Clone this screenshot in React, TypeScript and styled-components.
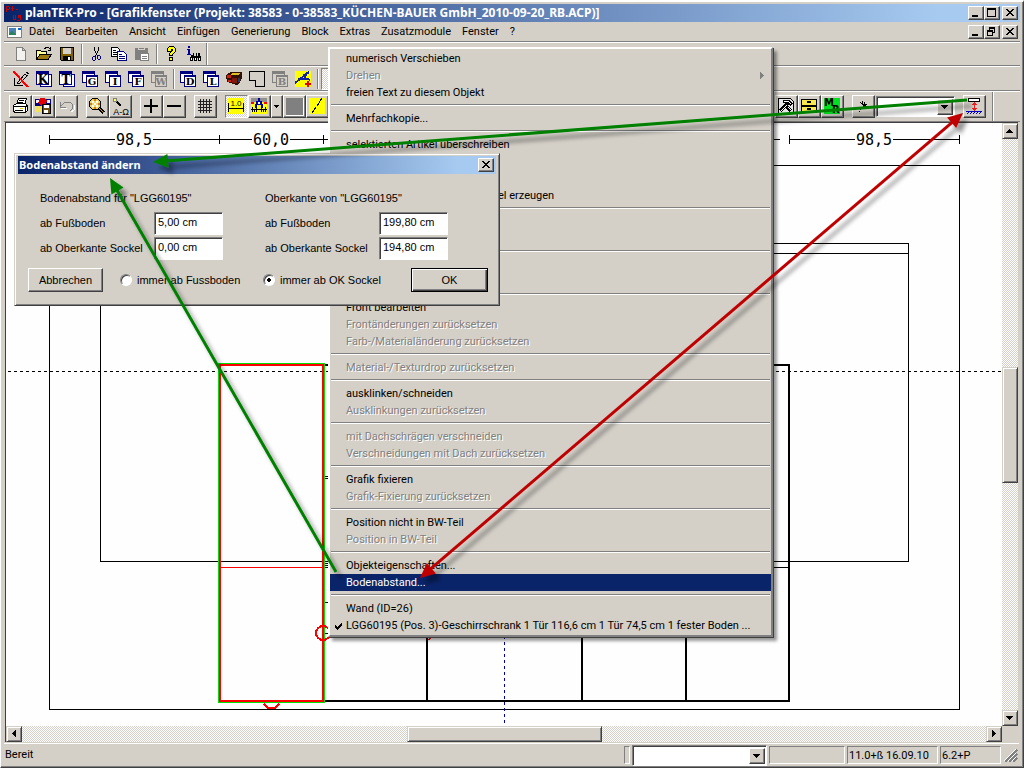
import React from "react";
import styled, { createGlobalStyle, css } from "styled-components";

const FACE = "#d4d0c8";
const SHADOW = "#808080";
const DARK = "#404040";
const NAVY = "#0a246a";
const UI_FONT = `Roboto, "Liberation Sans", sans-serif`;
const TITLE_FONT = `"Noto Sans", "Open Sans", sans-serif`;

const GlobalStyle = createGlobalStyle`
  * { box-sizing: border-box; }
  body {
    margin: 0;
    background: ${FACE};
    color: #000;
    font-family: ${UI_FONT};
    font-size: 11px;
    line-height: 17px;
  }
  button, input, select { font: inherit; color: inherit; margin: 0; padding: 0; border-radius: 0; }
`;

const raised = css`
  border: 1px solid;
  border-color: #fff ${DARK} ${DARK} #fff;
  box-shadow: inset -1px -1px 0 ${SHADOW};
  background: ${FACE};
`;

const sunken = css`
  border: 1px solid;
  border-color: ${SHADOW} #fff #fff ${SHADOW};
  box-shadow: inset 1px 1px 0 ${DARK};
  background: #fff;
`;

const dither = css`
  background: repeating-conic-gradient(#fff 0 25%, ${FACE} 0 50%) 0 0 / 2px 2px;
`;

const Window = styled.div`
  position: relative;
  display: flex;
  flex-direction: column;
  width: 100%;
  height: 100vh;
  min-height: 640px;
  overflow: hidden;
  padding: 2px 2px 0;
  border: 1px solid;
  border-color: #fff ${DARK} ${DARK} #fff;
  box-shadow: inset -1px -1px 0 ${SHADOW};
  border-top-width: 2px;
`;

const TitleBar = styled.header`
  display: flex;
  align-items: center;
  flex: none;
  height: 18px;
  margin: 0 1px;
  padding: 0 2px 0 1px;
  gap: 4px;
  background: linear-gradient(90deg, ${NAVY}, #a6caf0 92%);
  color: #fff;
`;

const Title = styled.h1<{ $small?: boolean }>`
  flex: 1;
  margin: 0;
  font: bold ${(p) => (p.$small ? 11 : 12)}px/18px ${TITLE_FONT};
  white-space: nowrap;
`;

const CaptionGroup = styled.div`
  display: flex;
`;

const CaptionButton = styled.button<{ $apart?: boolean }>`
  ${raised}
  display: grid;
  place-items: center;
  width: 16px;
  height: 14px;
  margin-left: ${(p) => (p.$apart ? 2 : 0)}px;
`;

const MenuBar = styled.nav`
  display: flex;
  align-items: center;
  flex: none;
  height: 20px;
  margin: 0 1px;
  padding: 0 2px 0 3px;
  border-bottom: 1px solid ${SHADOW};
`;

const MenuList = styled.ul`
  display: flex;
  flex: 1;
  gap: 11px;
  margin: 0 0 0 6px;
  padding: 0;
  list-style: none;
`;

const MenuButton = styled.button`
  border: 0;
  background: none;
  line-height: 17px;
`;

const Toolbar = styled.div<{ $height: number; $raised?: boolean }>`
  display: flex;
  align-items: center;
  flex: none;
  height: ${(p) => p.$height}px;
  margin: 0 1px;
  padding-left: ${(p) => (p.$raised ? 5 : 6)}px;
  border-top: 1px solid #fff;
  border-bottom: 1px solid ${SHADOW};
`;

const Rule = styled.span<{ $tall?: boolean }>`
  flex: none;
  width: 2px;
  height: ${(p) => (p.$tall ? "100%" : "20px")};
  margin: 0 ${(p) => (p.$tall ? 0 : 2)}px;
  border-left: 1px solid ${SHADOW};
  border-right: 1px solid #fff;
`;

const FlatButton = styled.button<{ $pressed?: boolean }>`
  display: grid;
  place-items: start;
  flex: none;
  width: 23px;
  height: 22px;
  padding: 3px 0 0 3px;
  border: 0;
  background: none;
  ${(p) =>
    p.$pressed &&
    css`
      ${dither}
      border: 1px solid;
      border-color: ${SHADOW} #fff #fff ${SHADOW};
    `}
`;

const RaisedButton = styled.button<{ $pressed?: boolean; $narrow?: boolean }>`
  ${raised}
  display: grid;
  place-items: ${(p) => (p.$narrow ? "center" : "start")};
  flex: none;
  width: ${(p) => (p.$narrow ? 12 : 23)}px;
  height: 23px;
  padding: ${(p) => (p.$narrow ? 0 : 2)}px;
  ${(p) =>
    p.$pressed &&
    css`
      ${dither}
      border-color: ${SHADOW} #fff #fff ${SHADOW};
      box-shadow: none;
    `}
`;

const Gap = styled.span<{ $width?: number }>`
  flex: ${(p) => (p.$width ? `0 0 ${p.$width}px` : "1")};
`;

const Combo = styled.div<{ $width: number }>`
  ${sunken}
  display: flex;
  flex: none;
  width: ${(p) => p.$width}px;
  height: 21px;
  padding: 2px 1px 1px 2px;
`;

const ComboSelect = styled.select`
  flex: 1;
  min-width: 0;
  border: 0;
  background: #fff;
  appearance: none;
`;

const ComboArrow = styled.span`
  ${raised}
  display: grid;
  place-items: center;
  width: 16px;
`;

const Workspace = styled.main`
  display: grid;
  flex: 1;
  min-height: 0;
  grid-template: 1fr 16px / 1fr 16px;
  margin: 0 3px 0 2px;
  border-left: 1px solid ${DARK};
  border-top: 1px solid ${DARK};
`;

const Sheet = styled.div`
  min-width: 0;
  min-height: 0;
  overflow: hidden;
  background: #fefefe;
  svg { display: block; }
`;

const ScrollTrack = styled.div<{ $vertical?: boolean }>`
  ${dither}
  display: flex;
  min-width: 0;
  min-height: 0;
  flex-direction: ${(p) => (p.$vertical ? "column" : "row")};
`;

const ScrollButton = styled.button`
  ${raised}
  border-color: ${FACE} ${DARK} ${DARK} ${FACE};
  box-shadow: inset 1px 1px 0 #fff, inset -1px -1px 0 ${SHADOW};
  display: grid;
  place-items: center;
  flex: none;
  width: 16px;
  height: 16px;
`;

const Thumb = styled.div<{ $grow: number }>`
  ${raised}
  border-color: ${FACE} ${DARK} ${DARK} ${FACE};
  box-shadow: inset 1px 1px 0 #fff, inset -1px -1px 0 ${SHADOW};
  flex: ${(p) => p.$grow} 1 0;
`;

const Space = styled.div<{ $grow: number }>`
  flex: ${(p) => p.$grow} 1 0;
`;

const StatusBar = styled.footer`
  display: flex;
  align-items: center;
  flex: none;
  gap: 2px;
  height: 23px;
  margin: 1px 2px 1px 1px;
  padding-left: 1px;
  border-top: 1px solid #fff;
`;

const StatusText = styled.span`
  flex: 1;
  padding-bottom: 1px;
`;

const StatusCell = styled.span<{ $width: number }>`
  flex: none;
  width: ${(p) => p.$width}px;
  height: 18px;
  padding-left: 1px;
  border: 1px solid;
  border-color: ${SHADOW} #fff #fff ${SHADOW};
  line-height: 17px;
  white-space: nowrap;
`;

const Popup = styled.div`
  position: absolute;
  left: 327px;
  top: 45px;
  width: 445px;
  padding: 1px 0;
  border: 2px solid;
  border-color: #fff ${SHADOW} ${SHADOW} #fff;
  box-shadow: 1px 1px 0 ${DARK}, 4px 4px 3px rgba(0, 0, 0, 0.4);
  background: ${FACE};
`;

const PopupItem = styled.button<{ $off?: boolean; $active?: boolean; $indent?: number }>`
  display: flex;
  align-items: center;
  justify-content: space-between;
  width: 100%;
  height: 17px;
  padding: 0 5px 0 ${(p) => p.$indent ?? 2}px;
  border: 0;
  background: ${(p) => (p.$active ? NAVY : "none")};
  color: ${(p) => (p.$active ? "#fff" : p.$off ? SHADOW : "#000")};
  text-shadow: ${(p) => (p.$off ? "1px 1px 0 #fff" : "none")};
  text-align: left;
  white-space: pre;
`;

const ItemLabel = styled.span`
  display: flex;
  align-items: center;
`;

const CheckSlot = styled.span`
  display: grid;
  place-items: center;
  width: 14px;
`;

const PopupRule = styled.hr`
  height: 2px;
  margin: 3px 1px 4px;
  border: 0;
  border-top: 1px solid ${SHADOW};
  border-bottom: 1px solid #fff;
`;

const Dialog = styled.form`
  position: absolute;
  left: 13px;
  top: 151px;
  width: 486px;
  padding: 2px;
  border: 1px solid;
  border-color: ${FACE} ${DARK} ${DARK} ${FACE};
  box-shadow: inset 1px 1px 0 #fff, inset -1px -1px 0 ${SHADOW};
  background: ${FACE};
  font-family: "Liberation Sans", Arial, sans-serif;
`;

const DialogFields = styled.div`
  display: grid;
  grid-template-columns: 114px 69px 42px 114px 69px;
  grid-template-rows: 26px 25px 25px;
  align-items: center;
  padding: 11px 23px 0;
`;

const Heading = styled.span`
  grid-column: span 2;
  white-space: nowrap;
`;

const Field = styled.label`
  display: contents;
`;

const FieldInput = styled.input`
  ${sunken}
  width: 69px;
  height: 23px;
  padding: 0 0 3px 3px;
`;

const DialogActions = styled.div`
  display: flex;
  align-items: center;
  padding: 7px 9px 11px 11px;
`;

const PushButton = styled.button<{ $primary?: boolean }>`
  ${raised}
  width: ${(p) => (p.$primary ? 77 : 75)}px;
  height: 24px;
  ${(p) =>
    p.$primary &&
    css`
      border-color: #000;
      box-shadow: inset 1px 1px 0 #fff, inset -1px -1px 0 ${DARK}, inset -2px -2px 0 ${SHADOW};
    `}
`;

const RadioLabel = styled.label<{ $width: number }>`
  display: flex;
  align-items: center;
  gap: 5px;
  width: ${(p) => p.$width}px;
  white-space: nowrap;
`;

const Radio = styled.input`
  appearance: none;
  width: 12px;
  height: 12px;
  border: 1px solid;
  border-color: ${SHADOW} #fff #fff ${SHADOW};
  border-radius: 50%;
  box-shadow: inset 1px 1px 0 ${DARK};
  background: #fff;
  &:checked {
    background: radial-gradient(circle at center, #000 0 2px, #fff 2px);
  }
`;

const Annotations = styled.svg`
  position: absolute;
  left: -1px;
  top: -2px;
  width: 100%;
  height: 100%;
  pointer-events: none;
`;

/* ---------- glyphs ---------- */

type IconProps = { children: React.ReactNode; w?: number; h?: number };
const Icon = ({ children, w = 16, h = 16 }: IconProps) => (
  <svg width={w} height={h} viewBox={`0 0 ${w} ${h}`} shapeRendering="crispEdges" aria-hidden="true">
    {children}
  </svg>
);

const tri: Record<string, string> = {
  down: "M0 2h7v1h-7zM1 3h5v1h-5zM2 4h3v1h-3zM3 5h1v1h-1z",
  up: "M3 2h1v1h-1zM2 3h3v1h-3zM1 4h5v1h-5zM0 5h7v1h-7z",
  left: "M2 3h1v1h-1zM3 2h1v3h-1zM4 1h1v5h-1zM5 0h1v7h-1z",
  right: "M2 0h1v7h-1zM3 1h1v5h-1zM4 2h1v3h-1zM5 3h1v1h-1z",
};
const Triangle = ({ dir, fill = "#000" }: { dir: string; fill?: string }) => (
  <Icon w={8} h={8}>
    <path d={tri[dir]} fill={fill} />
  </Icon>
);

const Minimize = () => (
  <Icon w={10} h={10}>
    <rect x="1" y="7" width="6" height="2" />
  </Icon>
);
const Maximize = () => (
  <Icon w={10} h={10}>
    <path d="M0 0h9v9h-9zM1 2v6h7v-6z" fillRule="evenodd" />
  </Icon>
);
const Restore = () => (
  <Icon w={10} h={10}>
    <path d="M2 0h6v6h-2v-1h1v-3h-4v1h-1zM0 3h6v6h-6zM1 5v3h4v-3z" fillRule="evenodd" />
  </Icon>
);
const Cross = () => (
  <Icon w={10} h={8}>
    <path d="M1 0h2v1h-2zM7 0h2v1h-2zM2 1h2v1h-2zM6 1h2v1h-2zM3 2h4v1h-4zM4 3h2v1h-2zM3 4h4v1h-4zM2 5h2v1h-2zM6 5h2v1h-2zM1 6h2v1h-2zM7 6h2v1h-2z" />
  </Icon>
);

const AppMark = () => (
  <Icon>
    <path
      d="M1 1.500h3M1.500 1v6M4.500 2v2M2 4.500h2M7.500 1v5M6 3.500h3M11 4.500h2M8.500 10v4M8 14.500h3M10.500 10v4M13 10.500h3M13.500 10v3M15.500 10v5M12 15.500h3"
      stroke="#c80000"
      fill="none"
    />
  </Icon>
);
const ChildMark = () => (
  <Icon>
    <rect x="0.5" y="2.5" width="14" height="11" fill="#fff" stroke={SHADOW} />
    <rect x="2" y="4" width="7" height="7" fill="#4a80b8" />
    <path d="M2 9l3-3 4 5h-7z" fill="#2f8060" />
    <path d="M11 4h3v2h-3z" fill="#0a64c8" />
  </Icon>
);

const PageIcon = () => (
  <Icon>
    <path d="M3.500 1.500h6l3 3v10h-9zM9.500 1.500v3h3" fill="#f4f2ee" stroke={SHADOW} />
  </Icon>
);
const OpenIcon = () => (
  <Icon>
    <path d="M.5 13V4.500h4l1 1h5v3" fill="#ffff99" stroke="#000" />
    <path d="M.5 13.500L4 8.500h11.500L12 13.500z" fill="#9a7a10" stroke="#000" />
    <path d="M8.500 2.500l2-1h2l2 2M14.500 1v3h-3" fill="none" stroke="#000" />
  </Icon>
);
const SaveIcon = () => (
  <Icon>
    <path d="M1.500 1.500h13v13h-12l-1-1z" fill="#806000" stroke="#000" />
    <rect x="4" y="2" width="8" height="6" fill={FACE} />
    <rect x="4" y="10" width="8" height="4" fill="#000" />
    <rect x="9" y="11" width="2" height="3" fill="#fff" />
  </Icon>
);
const CutIcon = () => (
  <Icon>
    <path d="M6.500 1v3l2 4 1 2M10.500 1v3l-2 4-1 2" fill="none" stroke="#000" />
    <path d="M5.500 10.500h2v3l-1 1h-1l-1-1v-2zM9.500 9.500h2l1 1v2l-1 1h-1l-1-1z" fill="none" stroke="#000080" />
  </Icon>
);
const CopyIcon = () => (
  <Icon>
    <path d="M.5 1.500h6l2 2v7h-8z" fill="#fff" stroke="#000" />
    <path d="M2 4.500h3M2 6.500h4M2 8.500h4" stroke="#000" />
    <path d="M6.500 5.500h6l3 3v6h-9z" fill="#fff" stroke="#000080" />
    <path d="M8 8.500h3M8 10.500h6M8 12.500h6" stroke="#000080" />
  </Icon>
);
const PasteIcon = () => (
  <Icon>
    <path d="M1 2h13v12h-13z" fill={SHADOW} />
    <path d="M4.500 1.500h6v2h-6z" fill={SHADOW} stroke={FACE} />
    <path d="M6.500 7.500h8v7h-8z" fill="#fff" stroke={SHADOW} />
    <path d="M8 10.500h5M8 12.500h5" stroke={SHADOW} />
  </Icon>
);
const HelpIcon = () => (
  <Icon>
    <path d="M4.500 5.500v-3l2-2h4l2 2v3l-3 3v1h-3v-2l3-3v-1h-1v2zM6.500 11.500h3v3h-3z" fill="#ffff00" stroke="#000" />
  </Icon>
);
const FindIcon = () => (
  <Icon>
    <path d="M2 0h2v2H2zM1 3h3v5h1v1H1V8h1V4H1z" fill="#0000a0" />
    <path d="M5 9h2v-2h1v3h2V7h1v3h1V7h2v3h1v5h-3v-3h-1v3h-3v-3h-1v3H4v-4h1z" />
    <path d="M5 12h1v2H5zM9 12h1v2H9zM13 12h1v2h-1z" fill="#fff" />
  </Icon>
);
const NoEditIcon = () => (
  <Icon>
    <path d="M1.500 7v7h8M4.500 11.500l7-8 3 1-8 8h-2zM13.500 1l2 2" fill="none" stroke="#000" />
    <path d="M0 0L15 16" stroke="#ff0000" strokeWidth="2" />
  </Icon>
);

/* A stack of two sheets; the lettered one lies in front, lower right or upper left. */
const SheetIcon = ({ letter, off, flip }: { letter: string; off?: boolean; flip?: boolean }) => {
  const ink = off ? SHADOW : "#000080";
  const paper = off ? FACE : "#fff";
  const letterProps = {
    textAnchor: "middle" as const,
    fontFamily: "DejaVu Serif, serif",
    fontWeight: "bold",
    fill: off ? SHADOW : "#000",
  };
  return flip ? (
    <Icon>
      <rect x="4.5" y="3.5" width="11" height="12" fill="#fff" stroke={ink} />
      <rect x="0.5" y="0.5" width="12" height="13" fill="#fff" stroke={ink} />
      <rect width="13" height="3" fill={ink} />
      <text x="7" y="13" fontSize="12" {...letterProps}>{letter}</text>
    </Icon>
  ) : (
    <Icon>
      <rect x="0.5" y="0.5" width="12" height="11" fill={paper} stroke={ink} />
      <rect width="13" height="3" fill={ink} />
      <rect x="4.5" y="4.5" width="11" height="11" fill={paper} stroke={ink} />
      <rect x="4" y="4" width="12" height="2" fill={ink} />
      <text x="10" y="14" fontSize="10" {...letterProps}>{letter}</text>
    </Icon>
  );
};

const CabinetIcon = () => (
  <Icon>
    <path d="M0 4l5-3h11v6l-3 6-3 1-9-3z" fill="#301008" />
    <path d="M6 2h8l-2 2H5z" fill="#e0c020" />
    <path d="M1 4h4v3H1zM2 9h3v2H2z" fill="#d02010" />
    <path d="M6 7h5v5H6z" fill="#801810" />
    <path d="M12 7h2v4h-2z" fill="#204060" />
  </Icon>
);
const ShapeIcon = () => (
  <Icon>
    <path d="M.5 .5h15v15h-9v-6h-6z" fill="none" stroke="#000" />
  </Icon>
);
const CompassIcon = () => (
  <Icon>
    <rect width="16" height="16" fill="#ffff00" />
    <path d="M0 12l10-8M3 8h9M8 5l6-4M11 2l-1 5 5 2" stroke="#1020a0" strokeWidth="2" fill="none" />
    <path d="M12 10h2v2h2v2h-2v2h-2v-2h-2v-2h2z" fill="#e00000" />
  </Icon>
);

const PrintIcon = () => (
  <Icon>
    <path d="M4.500 6.500l2-6h8l-2 6M1.500 7.500l3-2h9l2 2v5l-2 2h-11l-1-2z" fill="#fff" stroke="#000" />
    <path d="M1 8.500h12v5M7 2.500h5M6 4.500h5M3 12.500h8M13.500 9l2-2" fill="none" stroke="#000" />
    <rect x="8" y="10" width="3" height="1" fill="#e0d000" />
  </Icon>
);
const PictureSaveIcon = () => (
  <Icon>
    <path d="M0 1h16v12H0z" fill="#000080" />
    <path d="M1 2h3v3H1zM12 2h3v3h-3z" fill="#f0f0ff" />
    <path d="M0 8h8v6H0z" fill="#f0e060" />
    <path d="M5 0h4l3 3-2 4-4 1-3-3z" fill="#e00000" />
    <path d="M7.500 6.500h8v9h-8z" fill="#705010" stroke="#000" />
    <path d="M9 7h5v3H9zM9 12h4v3H9z" fill="#fff" />
  </Icon>
);
const UndoIcon = () => (
  <Icon w={18}>
    <path d="M3 10.500h6M13 14l3-2v-5" fill="none" stroke="#fff" />
    <path d="M2.500 4v5h5M2.500 8.500l4-4h6l2 2v4l-3 3" fill="none" stroke={SHADOW} />
  </Icon>
);
const MagnifierIcon = () => (
  <Icon>
    <path d="M3.500.5h5l3 3v5l-3 3h-5l-3-3v-5z" fill="#f0d860" stroke="#000" />
    <path d="M3 3h2v2H3zM7 3h2v2H7zM5 5h2v2H5zM3 7h2v2H3zM7 7h2v2H7z" fill="#fff" />
    <path d="M5 1h2v2H5zM1 5h2v2H1zM9 5h2v2H9zM5 9h2v2H5z" fill="#d08020" />
    <path d="M10 10l5 5" stroke="#000" strokeWidth="3" />
    <path d="M10 10l5 5" stroke="#d0a000" />
  </Icon>
);
const AlphaIcon = () => (
  <Icon w={18} h={18}>
    <path d="M1.500.5h3v3h-3z" fill="#ffff60" stroke={SHADOW} />
    <path d="M5 4l4 4" stroke="#000" strokeWidth="2" />
    <text x="9" y="17" textAnchor="middle" fontFamily="Liberation Sans" fontSize="9">A-Ω</text>
  </Icon>
);
const PlusIcon = () => (
  <Icon>
    <path d="M1 7h14v2H1zM7 1h2v14H7z" />
  </Icon>
);
const MinusIcon = () => (
  <Icon>
    <path d="M1 7h14v2H1z" />
  </Icon>
);
const GridIcon = () => (
  <Icon>
    <path d="M1 3.500h14M1 6.500h14M1 9.500h14M1 12.500h14M3.500 1v14M6.500 1v14M9.500 1v14M12.500 1v14" stroke="#202020" />
  </Icon>
);
const RulerIcon = () => (
  <Icon>
    <rect width="16" height="16" fill="#ffff00" />
    <path d="M.5 5v9M15.500 5v9M1 10.500h14" stroke="#000" />
    <text x="8" y="8" textAnchor="middle" fontFamily="Liberation Sans" fontSize="8">1.0</text>
  </Icon>
);
const DividersIcon = () => (
  <Icon>
    <rect width="16" height="16" fill="#ffff00" />
    <rect width="16" height="4" fill="#909090" />
    <path d="M0 4h3v2H0zM13 4h3v2h-3z" fill="#ff0000" />
    <path d="M7 0h2v3h2v3h1v4h-2v-3H6v3H4v-4h1v-3h2z" fill="#0000a0" />
    <path d="M7 4h2v2H7z" fill="#fff" />
    <path d="M0 11.500h16M1.500 9v5M5.500 10v4M10.500 10v4M14.500 9v5M3.500 11v3M12.500 11v3" stroke="#000" />
  </Icon>
);
const GreyBlockIcon = () => (
  <Icon w={18} h={18}>
    <rect width="18" height="18" fill="#fff" />
    <rect width="17" height="17" fill={SHADOW} />
  </Icon>
);
const SlashIcon = () => (
  <Icon>
    <rect width="16" height="16" fill="#ffff00" />
    <path d="M3 15l4-6M8 8l5-8" stroke="#000" fill="none" />
  </Icon>
);
const HammerIcon = () => (
  <Icon>
    <path d="M.5.5h12l3 3v12h-15z" fill="#e8e8e8" stroke="#000" />
    <path d="M2 13l8-8M5 3h5l4 4M9 9l4 4" fill="none" stroke="#000" strokeWidth="3" />
    <path d="M3 13l6-6M6 3h4l3 3M10 9l3 3" fill="none" stroke="#fff" />
  </Icon>
);
const DrawerIcon = () => (
  <Icon>
    <path d="M.5 1.500h15v6H.5zM.5 8.500h15v6H.5z" fill="#f8e850" stroke="#000" />
    <path d="M6.500 3.500h3v1h-3zM6.500 10.500h3v1h-3z" fill="#fff" stroke="#000" />
  </Icon>
);
const MrIcon = () => (
  <Icon>
    <rect width="16" height="16" fill="#00e020" />
    <text x="0" y="8" fontFamily="DejaVu Sans" fontWeight="bold" fontSize="10">M</text>
    <text x="8" y="15" fontFamily="DejaVu Sans" fontWeight="bold" fontSize="10">R</text>
  </Icon>
);
const SparkIcon = () => (
  <Icon>
    <path d="M5 4l4 4h6M7 3v3M9 4v4l-4 4M10 6h2M11 9l2 2M4 13h1" fill="none" stroke="#000" strokeWidth="1" />
    <path d="M8 6h3v3H8z" />
  </Icon>
);
const FloorDistanceIcon = () => (
  <Icon>
    <path d="M2.500.5h11v3h-11z" fill="#fff" stroke="#000" />
    <path d="M8 4h1v1h1v1h1v1H9v3h2v1h-1v1H9v1H8v-1H7v-1H6v-1h2V7H6V6h1V5h1z" fill="#f02020" />
    <path d="M0 13.500h16M1 15.500h1M2 14.500h1M4 15.500h1M5 14.500h1M7 15.500h1M8 14.500h1M10 15.500h1M11 14.500h1M13 15.500h1M14 14.500h1" stroke="#0000c0" />
  </Icon>
);
const CheckIcon = () => (
  <Icon w={8} h={8}>
    <path d="M0 3h1v1h1v1h1v-1h1v-1h1v-1h1v-1h1v3h-1v1h-1v1h-1v1h-1v1h-1v-1h-1v-1h-1z" />
  </Icon>
);
const GripIcon = () => (
  <Icon w={16} h={16}>
    <path d="M2 15L14 3M6 15l8-8M10 15l4-4" stroke={SHADOW} strokeWidth="2" />
    <path d="M1 14L13 2M5 14l8-8M9 14l4-4" stroke="#fff" />
  </Icon>
);

/* ---------- data ---------- */

const menus = ["Datei", "Bearbeiten", "Ansicht", "Einfügen", "Generierung", "Block", "Extras", "Zusatzmodule", "Fenster", "?"];

type Tool = [string, React.ReactNode] | null;

const fileTools: Tool[] = [
  ["Neu", <PageIcon />],
  ["Öffnen", <OpenIcon />],
  ["Speichern", <SaveIcon />],
  null,
  ["Ausschneiden", <CutIcon />],
  ["Kopieren", <CopyIcon />],
  ["Einfügen", <PasteIcon />],
  null,
  ["Hilfe", <HelpIcon />],
  ["Suchen", <FindIcon />],
];

const sheetTools: Tool[] = [
  ["Nicht bearbeiten", <NoEditIcon />],
  ["K", <SheetIcon letter="K" flip />],
  ["T", <SheetIcon letter="T" flip />],
  ["G", <SheetIcon letter="G" />],
  ["I", <SheetIcon letter="I" />],
  ["F", <SheetIcon letter="F" />],
  ["W", <SheetIcon letter="W" off />],
  null,
  ["D", <SheetIcon letter="D" />],
  ["L", <SheetIcon letter="L" />],
  ["Schrank", <CabinetIcon />],
  ["Form", <ShapeIcon />],
  ["B", <SheetIcon letter="B" off />],
  ["Zirkel", <CompassIcon />],
  null,
];

type Entry = { text: string; off?: boolean; active?: boolean; sub?: boolean; checked?: boolean; indent?: number };

const popupGroups: Entry[][] = [
  [{ text: "numerisch Verschieben" }, { text: "Drehen", off: true, sub: true }, { text: "freien Text zu diesem Objekt" }],
  [{ text: "Mehrfachkopie..." }],
  [{ text: "selektierten Artikel überschreiben" }, { text: "" }, { text: "" }, { text: "el erzeugen", indent: 154 }],
  [{ text: "" }, { text: "" }],
  [{ text: "" }, { text: "" }],
  [
    { text: "Front bearbeiten" },
    { text: "Frontänderungen zurücksetzen", off: true },
    { text: "Farb-/Materialänderung zurücksetzen", off: true },
  ],
  [{ text: "Material-/Texturdrop zurücksetzen", off: true }],
  [{ text: "ausklinken/schneiden" }, { text: "Ausklinkungen zurücksetzen", off: true }],
  [
    { text: "mit Dachschrägen verschneiden", off: true },
    { text: "Verschneidungen mit Dach zurücksetzen", off: true },
  ],
  [{ text: "Grafik fixieren" }, { text: "Grafik-Fixierung zurücksetzen", off: true }],
  [{ text: "Position nicht in BW-Teil" }, { text: "Position in BW-Teil", off: true }],
  [{ text: "Objekteigenschaften..." }, { text: "Bodenabstand...", active: true }],
  [
    { text: "Wand (ID=26)" },
    { text: "LGG60195 (Pos. 3)-Geschirrschrank 1 Tür 116,6 cm 1 Tür 74,5 cm 1 fester Boden ...", checked: true },
  ],
];

/* ---------- parts ---------- */

const Tools = ({ items }: { items: Tool[] }) => (
  <>
    {items.map((t, i) =>
      t ? (
        <FlatButton key={i} type="button" aria-label={t[0]}>
          {t[1]}
        </FlatButton>
      ) : (
        <Rule key={i} />
      )
    )}
  </>
);

const ComboBox = ({ label, width }: { label: string; width: number }) => (
  <Combo $width={width}>
    <ComboSelect aria-label={label} />
    <ComboArrow>
      <Triangle dir="down" />
    </ComboArrow>
  </Combo>
);

const dimText = { fontFamily: "DejaVu Sans Mono, monospace", fontSize: 15, textAnchor: "middle" as const };

/* Front elevation: room outline, dimension chain and the cabinet row. */
const Elevation = () => (
  <svg width="100%" height="100%" shapeRendering="crispEdges">
    <g transform="translate(-6 -123)" fill="none" stroke="#000">
      <path d="M49.500 139.500H115M153 139.500H252M290 139.500H780M789.500 139.500H855M893 139.500H959.500" />
      <path d="M49.500 135v9M219.500 135v9M323.500 135v9M789.500 135v9M959.500 135v9" />
      <g stroke="none" fill="#000">
        <text x="134" y="145" {...dimText}>98,5</text>
        <text x="271" y="145" {...dimText}>60,0</text>
        <text x="874" y="145" {...dimText}>98,5</text>
      </g>
      <path d="M49.500 165.500h910v544h-910z" />
      <path d="M100.500 243.500h808v318h-808zM100.500 253.500h808M324 567.500h465" />
      <path d="M324 365h465v336h-465M427 365v336M582 365v336M686 365v336" strokeWidth="2" />
      <path d="M324 476.500h5M324 478.500h5M324 563.500h5M324 565.500h5M324 602.500h5M324 633.500h5" />
      <path d="M8 371.500H1002" strokeDasharray="3 3" />
      <path d="M504.500 600V724" stroke="#0000a0" strokeDasharray="3 3" />
      <path d="M218.500 363.500h106v339h-106z" stroke="#00e000" />
      <path d="M220 365h103v336h-103z" stroke="#ff0000" strokeWidth="2" />
      <path d="M221 567.500h102" stroke="#ff0000" />
      <g stroke="#ff0000" strokeWidth="2">
        <circle cx="323" cy="633" r="7" />
        <path d="M264 704l4 4h7l4-4M429 640l3-5" />
      </g>
    </g>
  </svg>
);

type ArrowProps = { from: [number, number]; to: [number, number]; color: string; both?: boolean };
const Arrow = ({ from, to, color, both }: ArrowProps) => {
  const len = Math.hypot(to[0] - from[0], to[1] - from[1]);
  const ux = (to[0] - from[0]) / len;
  const uy = (to[1] - from[1]) / len;
  const head = ([x, y]: [number, number], s: number) =>
    `${x},${y} ${x - s * ux * 15 - uy * 7},${y - s * uy * 15 + ux * 7} ${x - s * ux * 15 + uy * 7},${y - s * uy * 15 - ux * 7}`;
  const inset = both ? 12 : 0;
  return (
    <g fill={color} filter="url(#cast)">
      <line
        x1={from[0] + ux * inset}
        y1={from[1] + uy * inset}
        x2={to[0] - ux * 12}
        y2={to[1] - uy * 12}
        stroke={color}
        strokeWidth="3"
      />
      <polygon points={head(to, 1)} />
      {both && <polygon points={head(from, -1)} />}
    </g>
  );
};

export default function App() {
  return (
    <Window>
      <GlobalStyle />
      <TitleBar>
        <AppMark />
        <Title>planTEK-Pro - [Grafikfenster (Projekt: 38583 - 0-38583_KÜCHEN-BAUER GmbH_2010-09-20_RB.ACP)]</Title>
        <CaptionGroup>
          <CaptionButton type="button" aria-label="Minimieren"><Minimize /></CaptionButton>
          <CaptionButton type="button" aria-label="Maximieren"><Maximize /></CaptionButton>
          <CaptionButton type="button" aria-label="Schließen" $apart><Cross /></CaptionButton>
        </CaptionGroup>
      </TitleBar>

      <MenuBar>
        <ChildMark />
        <MenuList>
          {menus.map((m) => (
            <li key={m}>
              <MenuButton type="button">{m}</MenuButton>
            </li>
          ))}
        </MenuList>
        <CaptionGroup>
          <CaptionButton type="button" aria-label="Fenster minimieren"><Minimize /></CaptionButton>
          <CaptionButton type="button" aria-label="Fenster wiederherstellen"><Restore /></CaptionButton>
          <CaptionButton type="button" aria-label="Fenster schließen" $apart><Cross /></CaptionButton>
        </CaptionGroup>
      </MenuBar>

      <Toolbar $height={24}>
        <Tools items={fileTools} />
        <Rule $tall />
      </Toolbar>
      <Toolbar $height={25}>
        <Tools items={sheetTools} />
        <FlatButton type="button" aria-label="Raster" $pressed />
      </Toolbar>
      <Toolbar $height={31} $raised>
        <RaisedButton type="button" aria-label="Drucken"><PrintIcon /></RaisedButton>
        <RaisedButton type="button" aria-label="Bild speichern"><PictureSaveIcon /></RaisedButton>
        <RaisedButton type="button" aria-label="Rückgängig"><UndoIcon /></RaisedButton>
        <Gap $width={8} />
        <RaisedButton type="button" aria-label="Lupe"><MagnifierIcon /></RaisedButton>
        <RaisedButton type="button" aria-label="A bis Omega"><AlphaIcon /></RaisedButton>
        <Gap $width={8} />
        <RaisedButton type="button" aria-label="Vergrößern"><PlusIcon /></RaisedButton>
        <RaisedButton type="button" aria-label="Verkleinern"><MinusIcon /></RaisedButton>
        <Gap $width={8} />
        <RaisedButton type="button" aria-label="Gitter"><GridIcon /></RaisedButton>
        <Gap $width={8} />
        <RaisedButton type="button" aria-label="Maße" $pressed><RulerIcon /></RaisedButton>
        <RaisedButton type="button" aria-label="Bemaßung"><DividersIcon /></RaisedButton>
        <RaisedButton type="button" aria-label="Bemaßungsarten" $narrow>
          <Icon w={6} h={3}><path d="M0 0h5v1h-5zM1 1h3v1h-3zM2 2h1v1h-1z" /></Icon>
        </RaisedButton>
        <RaisedButton type="button" aria-label="Farbe"><GreyBlockIcon /></RaisedButton>
        <RaisedButton type="button" aria-label="Linie"><SlashIcon /></RaisedButton>
        <Gap />
        <RaisedButton type="button" aria-label="Werkzeug"><HammerIcon /></RaisedButton>
        <RaisedButton type="button" aria-label="Auszüge"><DrawerIcon /></RaisedButton>
        <RaisedButton type="button" aria-label="MR"><MrIcon /></RaisedButton>
        <Gap $width={8} />
        <RaisedButton type="button" aria-label="Fang"><SparkIcon /></RaisedButton>
        <Gap $width={1} />
        <ComboBox label="Auswahl" width={79} />
        <Gap $width={8} />
        <RaisedButton type="button" aria-label="Bodenabstand"><FloorDistanceIcon /></RaisedButton>
        <Gap $width={6} />
        <Rule $tall />
        <Gap $width={26} />
      </Toolbar>

      <Workspace>
        <Sheet>
          <Elevation />
        </Sheet>
        <ScrollTrack $vertical>
          <ScrollButton type="button" aria-label="Nach oben"><Triangle dir="up" /></ScrollButton>
          <Space $grow={229} />
          <Thumb $grow={114} />
          <Space $grow={228} />
          <ScrollButton type="button" aria-label="Nach unten"><Triangle dir="down" /></ScrollButton>
        </ScrollTrack>
        <ScrollTrack>
          <ScrollButton type="button" aria-label="Nach links"><Triangle dir="left" /></ScrollButton>
          <Space $grow={386} />
          <Thumb $grow={193} />
          <Space $grow={385} />
          <ScrollButton type="button" aria-label="Nach rechts"><Triangle dir="right" /></ScrollButton>
        </ScrollTrack>
      </Workspace>

      <StatusBar>
        <StatusText>Bereit</StatusText>
        <StatusCell $width={6} />
        <ComboBox label="Status" width={135} />
        <StatusCell $width={76} />
        <StatusCell $width={91}>11.0+ß 16.09.10</StatusCell>
        <StatusCell $width={61}>6.2+P</StatusCell>
        <GripIcon />
      </StatusBar>

      <Popup>
        {popupGroups.map((group, g) => (
          <React.Fragment key={g}>
            {g > 0 && <PopupRule />}
            {group.map((e, i) => (
              <PopupItem key={i} type="button" $off={e.off} $active={e.active} $indent={e.indent}>
                <ItemLabel>
                  <CheckSlot>{e.checked && <CheckIcon />}</CheckSlot>
                  {e.text}
                </ItemLabel>
                {e.sub && <Triangle dir="right" fill={SHADOW} />}
              </PopupItem>
            ))}
          </React.Fragment>
        ))}
      </Popup>

      <Dialog onSubmit={(ev) => ev.preventDefault()}>
        <TitleBar as="div">
          <Title as="h2" $small>Bodenabstand ändern</Title>
          <CaptionButton type="button" aria-label="Dialog schließen"><Cross /></CaptionButton>
        </TitleBar>
        <DialogFields>
          <Heading>Bodenabstand für "LGG60195"</Heading>
          <span />
          <Heading>Oberkante von "LGG60195"</Heading>
          <Field>ab Fußboden<FieldInput defaultValue="5,00 cm" /></Field>
          <span />
          <Field>ab Fußboden<FieldInput defaultValue="199,80 cm" /></Field>
          <Field>ab Oberkante Sockel<FieldInput defaultValue="0,00 cm" /></Field>
          <span />
          <Field>ab Oberkante Sockel<FieldInput defaultValue="194,80 cm" /></Field>
        </DialogFields>
        <DialogActions>
          <PushButton type="button">Abbrechen</PushButton>
          <Gap $width={17} />
          <RadioLabel $width={143}><Radio type="radio" name="base" />immer ab Fussboden</RadioLabel>
          <RadioLabel $width={130}><Radio type="radio" name="base" defaultChecked />immer ab OK Sockel</RadioLabel>
          <Gap />
          <PushButton type="submit" $primary>OK</PushButton>
        </DialogActions>
      </Dialog>

      <Annotations aria-hidden="true">
        <defs>
          <filter id="cast" filterUnits="userSpaceOnUse" x="0" y="0" width="1100" height="800">
            <feDropShadow dx="5" dy="6" stdDeviation="2" floodColor="#000" floodOpacity="0.4" />
          </filter>
        </defs>
        <Arrow from={[967, 100]} to={[153, 162]} color="#008000" />
        <Arrow from={[336, 572]} to={[110, 178]} color="#008000" />
        <Arrow from={[963, 113]} to={[420, 578]} color="#c00000" both />
      </Annotations>
    </Window>
  );
}
